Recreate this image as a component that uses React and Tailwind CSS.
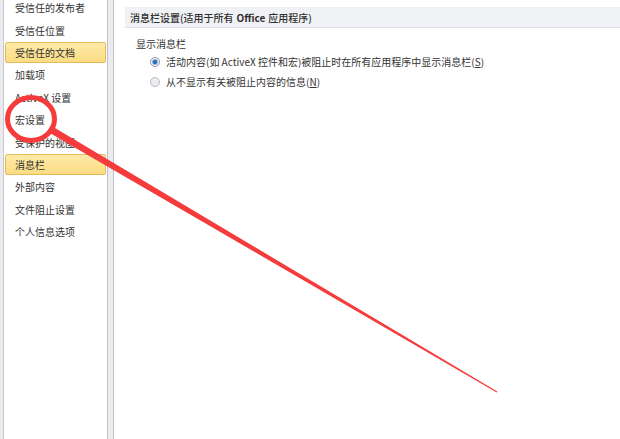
const navItems = [
  '受信任的发布者',
  '受信任位置',
  '受信任的文档',
  '加载项',
  'ActiveX 设置',
  '宏设置',
  '受保护的视图',
  '消息栏',
  '外部内容',
  '文件阻止设置',
  '个人信息选项',
]

const selected = ['受信任的文档', '消息栏']

const Radio = ({ checked }) => (
  <span
    className={
      'flex h-[10px] w-[10px] shrink-0 items-center justify-center rounded-full border ' +
      (checked ? 'border-[#8e939c] bg-white' : 'border-[#b9bcc4] bg-[#ebecef]')
    }
  >
    {checked && <span className="h-[4px] w-[4px] rounded-full bg-[#2b64b8] shadow-[0_0_1px_1px_#7fa4d8]" />}
  </span>
)

const Annotation = () => (
  <svg className="pointer-events-none absolute left-0 top-0" width="620" height="439" viewBox="0 0 620 439">
    <ellipse cx="31" cy="119" rx="23.5" ry="21.5" fill="none" stroke="#f53b3b" strokeWidth="5" />
    <polygon points="50.8,125.5 497.3,391.5 496.7,392.5 47.2,131.5" fill="#f53b3b" />
  </svg>
)

export default function App() {
  return (
    <div
      className="relative flex h-[439px] w-[620px] overflow-hidden bg-white text-[10px] text-[#333]"
      style={{ fontFamily: '"Noto Sans CJK SC", "Noto Sans", sans-serif' }}
    >
      <div className="w-[4px] shrink-0 border-r border-[#c8c8cf] bg-[#ebebef]" />

      <div className="flex w-[103px] shrink-0 flex-col px-[1px]">
        <div className="-mt-[2.8px] flex flex-col gap-[1.4px]">
          {navItems.map((item) => (
            <div
              key={item}
              className={
                'h-[21px] rounded-[2px] border pl-[9px] leading-[19px] ' +
                (selected.includes(item)
                  ? 'border-[#e2bd5c] bg-gradient-to-b from-[#fdeaa8] to-[#fbdc82]'
                  : 'border-transparent')
              }
            >
              {item}
            </div>
          ))}
        </div>
      </div>

      <div className="w-[7px] shrink-0 border-x border-[#bfc0c8] bg-[#ececf0]" />

      <div className="flex flex-1 flex-col pl-[11px] pt-[7px]">
        <div className="flex h-[21px] items-center border-b border-[#e1e2e7] bg-[#f0f1f5] pl-[5px] font-medium text-[#2f2f2f]">
          消息栏设置(适用于所有 <span className="mx-[3px] font-bold">Office</span> 应用程序)
        </div>

        <div className="pl-[11px] pt-[9px]">
          <div className="h-[14px] leading-[14px]">显示消息栏</div>
          <div className="flex flex-col pl-[14px] pt-[1px]">
            <div className="flex h-[20px] items-center gap-[6px] leading-[20px]">
              <Radio checked />
              <span>
                活动内容(如 ActiveX 控件和宏)被阻止时在所有应用程序中显示消息栏(<span className="underline">S</span>)
              </span>
            </div>
            <div className="flex h-[20px] items-center gap-[6px] leading-[20px]">
              <Radio />
              <span>
                从不显示有关被阻止内容的信息(<span className="underline">N</span>)
              </span>
            </div>
          </div>
        </div>
      </div>

      <Annotation />
    </div>
  )
}
